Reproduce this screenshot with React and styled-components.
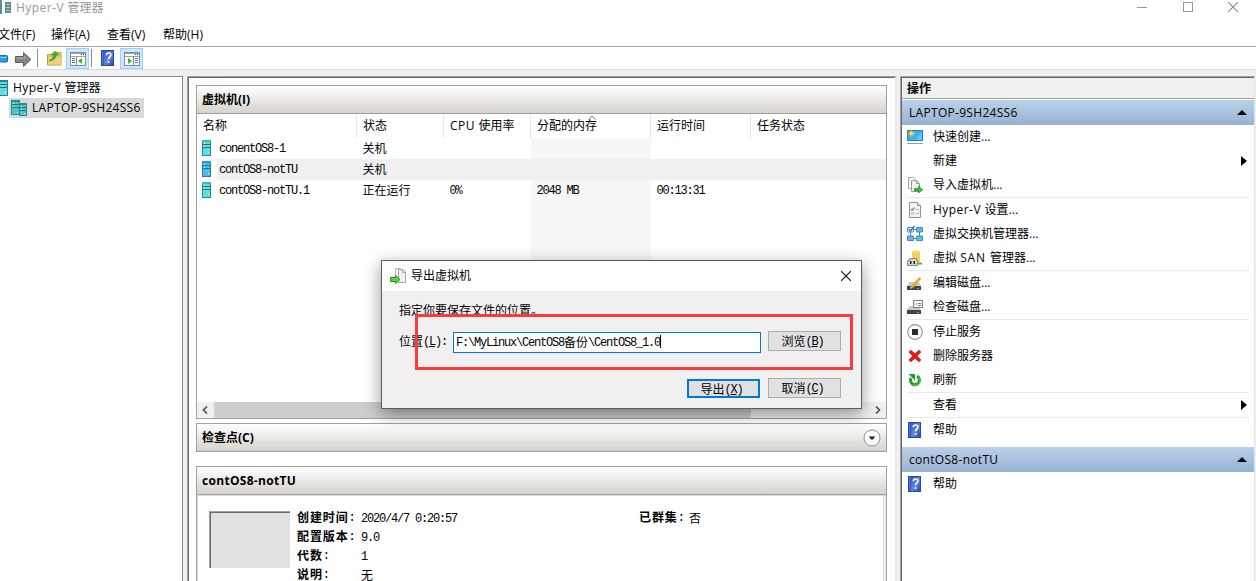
import React from 'react';
import styled, { createGlobalStyle, css } from 'styled-components';

const GlobalStyle = createGlobalStyle`
    * {
        box-sizing: border-box;
    }

    body {
        margin: 0;
        overflow: hidden;
    }
`

const Window = styled.div`
    display: flex;
    flex-direction: column;
    width: 1256px;
    height: 581px;
    overflow: hidden;
    position: relative;
    background: #f0f0f0;
    color: #000;
    font-family: "Open Sans", "Noto Sans CJK SC", sans-serif;
    font-size: 12px;
    line-height: 16px;
    white-space: nowrap;

    svg {
        display: block;
        flex: none;
    }
`

const TitleBar = styled.div`
    display: flex;
    align-items: flex-start;
    height: 24px;
    background: #fff;
    color: #999;
`

const TitleText = styled.span`
    flex: 1;
    padding-left: 5px;
`

const MenuBar = styled.div`
    display: flex;
    align-items: center;
    height: 22px;
    background: #fff;
`

const MenuItem = styled.span`
    width: ${props => props.$width || 56}px;
    margin-left: ${props => props.$shift || 0}px;
`

const ToolBar = styled.div`
    display: flex;
    align-items: center;
    height: 24px;
    background: #fff;
    border-top: 1px solid #a9a9a9;
    border-bottom: 1px solid #dcdcdc;
`

const ToolDivider = styled.div`
    width: 1px;
    height: 18px;
    background: #8c8c8c;
    margin: 0 ${props => props.$right}px 0 ${props => props.$left}px;
`

const ToolArrows = styled.div`
    display: flex;
    align-items: center;
    gap: 7px;
    padding-top: 2px;
`

const ToolButton = styled.div`
    display: flex;
    align-items: center;
    justify-content: center;
    width: 23px;
    height: 21px;
    padding-top: 2px;
    background: #cce8ff;
    border: 1px solid #99d1ff;
    margin-left: ${props => props.$left}px;
`

const Panes = styled.div`
    flex: 1;
    display: flex;
    padding-top: 6px;
    min-height: 0;
`

const Tree = styled.div`
    width: 183px;
    padding-top: 1px;
    background: #fff;
    border-top: 1px solid #828790;
    border-right: 1px solid #828790;
`

const TreeRow = styled.div`
    display: flex;
    align-items: center;
    height: 20px;
    padding-left: ${props => props.$indent}px;
`

const TreeLabel = styled.span`
    height: 20px;
    line-height: 20px;
    padding: 0 3px 0 5px;
    ${props => props.$selected && css`
        background: #d9d9d9;
        margin-left: -18px;
        padding-left: 23px;
    `}
`

const TreeIcon = styled.span`
    z-index: 1;
`

const Sunken = styled.div`
    border-top: 1px solid #a0a0a0;
    border-left: 1px solid #a0a0a0;
    border-right: 1px solid #e3e3e3;
`

const SunkenInner = styled.div`
    height: 100%;
    border-top: 1px solid #696969;
    border-left: 1px solid #696969;
    background: #fff;
`

const Center = styled(Sunken)`
    width: 710px;
    margin-left: 4px;
    border-right: 2px solid #e9e9e9;
`

const CenterInner = styled(SunkenInner)`
    display: flex;
    flex-direction: column;
    padding: 7px 8px 0 7px;
`

const SectionHeader = styled.div`
    display: flex;
    align-items: center;
    justify-content: space-between;
    flex: none;
    height: 29px;
    padding: 0 5px;
    border: 1px solid #a0a0a0;
    background: linear-gradient(#fff, #d6d3cb);
    font-weight: bold;
    margin-top: ${props => props.$top || 0}px;
`

const MachineBox = styled.div`
    height: 305px;
    flex: none;
    border: 1px solid #a0a0a0;
    border-top: none;
    display: flex;
    flex-direction: column;
`

const COLUMNS = '160px 87px 87px 120px 100px 1fr'

const TableHead = styled.div`
    display: grid;
    grid-template-columns: ${COLUMNS};
    height: 24px;
    background: #fff;
`

const HeadCell = styled.div`
    position: relative;
    border-right: 1px solid #e5e5e5;
    padding-left: 6px;
    line-height: 24px;

    &:last-child {
        border: none;
    }

    svg {
        position: absolute;
        top: 1px;
        left: 57px;
    }
`

const TableBody = styled.div`
    flex: 1;
    background: linear-gradient(90deg, #fff 334px, #f7f7f7 334px, #f7f7f7 454px, #fff 454px);
`

const TableRow = styled.div`
    display: grid;
    grid-template-columns: ${COLUMNS};
    height: 21px;
    background: ${props => props.$selected ? 'linear-gradient(90deg, #fff 20px, #f0f0f0 20px)' : 'none'};
`

const Cell = styled.div`
    display: flex;
    align-items: center;
    padding: 0 0 1px ${props => props.$first ? 5 : 5.5}px;
    gap: 8px;
`

const ScrollBar = styled.div`
    display: flex;
    align-items: center;
    justify-content: space-between;
    height: 16px;
    padding: 0 5px 1px;
    background: linear-gradient(90deg, #f0f0f0 17px, #cdcdcd 17px, #cdcdcd 554px, #f0f0f0 554px);
`

const DetailBox = styled.div`
    flex: 1;
    display: flex;
    padding: 15px 0 0 11px;
    border-left: 1px solid #a0a0a0;
    border-right: 1px solid #a0a0a0;
    box-shadow: inset 1px 1px #dcdcdc, inset -2px 0 #ededed, inset -3px 0 #dcdcdc;
`

const Thumbnail = styled.div`
    width: 81px;
    height: 57px;
    margin: 1px 7px 0 1px;
    background: #e1e1e1;
    border-top: 1px solid #a0a0a0;
    border-left: 1px solid #a0a0a0;
    box-shadow: inset 1px 1px #696969;
`

const DetailColumn = styled.div`
    width: ${props => props.$width}px;
    margin-top: -2px;
`

const DetailRow = styled.div`
    display: grid;
    grid-template-columns: ${props => props.$label}px auto;
    align-items: center;
    height: 19px;
`

const Bold = styled.b`
    font-weight: bold;
    letter-spacing: 0.9px;
`

const Actions = styled(Sunken)`
    width: 355px;
    margin-left: 3px;
`

const ActionsTitle = styled.div`
    height: 22px;
    border-bottom: 1px solid #fff;
    background: linear-gradient(#f0f0f0 20px, #a0a0a0 20px);
    font-weight: bold;
    line-height: 21px;
    padding-left: 5px;
`

const GroupHeader = styled.div`
    display: flex;
    align-items: center;
    justify-content: space-between;
    height: 25px;
    padding: 0 7px;
    background: linear-gradient(#bad1e9, #98b2d1);
    margin-top: ${props => props.$top || 0}px;
`

const Action = styled.div`
    display: flex;
    align-items: center;
    height: 24px;
    padding: 0 7px 0 5px;
`

const ActionIcon = styled.span`
    width: 26px;
`

const ActionLabel = styled.span`
    flex: 1;
`

const ActionDivider = styled.div`
    height: 1px;
    margin: 0 5px;
    background: #e8e8e8;
`

const WideText = styled.span`
    letter-spacing: ${props => props.$spacing}px;
`

const SongText = styled.span`
    font-family: "Noto Sans CJK SC", sans-serif;
    font-size: 12px;
    line-height: 16px;
`

const SongLatin = styled.span`
    font-family: "Liberation Mono", monospace;
    font-size: 12px;
    line-height: 12px;
    letter-spacing: -1.2px;
    font-weight: normal;
    vertical-align: 1px;
`

const Dialog = styled.div`
    position: absolute;
    left: 381px;
    top: 260px;
    width: 481px;
    height: 149px;
    border: 1px solid #5c5c5c;
    background: #f0f0f0;
    box-shadow: 0 5px 16px rgba(0, 0, 0, 0.42);
`

const DialogTitle = styled.div`
    display: flex;
    align-items: center;
    height: 30px;
    padding: 0 10px 1px 8px;
    background: #fff;
`

const DialogTitleText = styled.span`
    flex: 1;
    padding: 1px 0 0 4px;
`

const DialogBody = styled.div`
    padding: 11px 20px 0 17px;
`

const PathRow = styled.div`
    display: flex;
    align-items: center;
    height: 20px;
    margin-top: 12px;
`

const PathLabel = styled.div`
    width: 54px;
`

const PathInput = styled.div`
    display: flex;
    align-items: center;
    width: 308px;
    height: 21px;
    margin: 2px 7px 0 0;
    padding: 0 2px 1px;
    background: #fff;
    border: 1px solid #0078d7;
`

const Caret = styled.span`
    width: 1px;
    height: 13px;
    background: #000;
`

const ButtonRow = styled.div`
    display: flex;
    justify-content: flex-end;
    align-items: flex-end;
    gap: 8px;
    margin-top: 27px;
`

const Button = styled.div`
    display: flex;
    align-items: center;
    justify-content: center;
    width: 73px;
    height: ${props => props.$primary ? 19 : 20}px;
    padding-right: 4px;
    background: #e1e1e1;
    border: ${props => props.$primary ? '2px solid #0078d7' : '1px solid #adadad'};
`

const Highlight = styled.div`
    position: absolute;
    left: 415px;
    top: 314px;
    width: 438px;
    height: 56px;
    border: 3px solid #fb3b3b;
`

// latin runs are set on a 6px grid, half of a chinese character
const Song = ({ children, hot }) => (
    <SongText>
        {children.split(/([\x20-\x7e]+)/).map((run, i) => {
            if (i % 2 === 0) return run
            return (
                <SongLatin key={i}>
                    {hot ? <>(<u>{hot}</u>){run.slice(3)}</> : run}
                </SongLatin>
            )
        })}
    </SongText>
)

// only the capitals and latin words get the extra spacing
const Label = ({ children, spacing = 0.45 }) => (
    <span>
        {children.split(/([A-Za-z][A-Za-z0-9-]+ ?)/).map((run, i) => (
            i % 2 === 0 ? run : <WideText key={i} $spacing={spacing}>{run}</WideText>
        ))}
    </span>
)

const ServerIcon = ({ blue }) => (
    <svg width="9" height="16" viewBox="0 0 9 16">
        <rect width="9" height="16" fill={blue ? '#2183ad' : '#1d8f9b'} />
        <rect x="1" y="2" width="7" height="13" fill={blue ? '#4db9e6' : '#63dce0'} />
        <path d="M1 4.5h7M1 7.5h7" stroke={blue ? '#1d7096' : '#167681'} />
        <path d="M2 3.5h1M2 6.5h1M6 12.5h1" stroke="#fff" />
        <path d="M0 1h9" stroke={blue ? '#2a9cc8' : '#36b8c0'} strokeWidth="2" />
    </svg>
)

const HostIcon = () => (
    <svg width="16" height="16" viewBox="0 0 16 16">
        <path fill="#2b8b93" d="M0 0h9v15H0zM8 3h8v13H8z" />
        <path fill="#52c2c8" d="M1 2h7v12H1zM9 5h6v10H9z" />
        <path d="M1 4.5h7M1 7.5h7M9 7.5h6M9 10.5h6" stroke="#20747c" />
        <path d="M2 3.5h1M2 6.5h1M10 6.5h1M10 9.5h1M13 13.5h1M6 12.5h1" stroke="#dff" />
    </svg>
)

const HelpIcon = () => (
    <svg width="16" height="16" viewBox="0 0 16 16">
        <defs>
            <linearGradient id="book" x1="0" y1="0" x2="1" y2="1">
                <stop offset="0" stopColor="#2f55c8" />
                <stop offset=".55" stopColor="#6685dc" />
                <stop offset="1" stopColor="#2748b4" />
            </linearGradient>
        </defs>
        <rect x="1" width="13" height="16" fill="#2a45a4" />
        <rect x="2" y="1" width="1.5" height="14" fill="#4a74e0" />
        <rect x="4" y="1" width="9" height="14" fill="url(#book)" />
        <path d="M6.3 5.2c0-3 4.500-2.800 4.500-.3 0 2-2.200 2-2.200 4.400M8.600 11v2" fill="none" stroke="#fff" strokeWidth="1.600" />
    </svg>
)

const ForwardIcon = () => (
    <svg width="17" height="15" viewBox="0 0 17 15">
        <path d="M.5 4.5h8v-4l7.5 7-7.5 7v-4h-8z" fill="#858585" stroke="#5f5f5f" />
        <path d="M2 6h8V4" fill="none" stroke="#b5b5b5" />
    </svg>
)

const BackIcon = () => (
    <svg width="8" height="8" viewBox="0 0 8 8">
        <rect x="-2" y=".5" width="9.5" height="6.5" rx="1" fill="#2e9be6" stroke="#1668b0" />
        <path d="M0 2.5h6" stroke="#7fd0ff" />
    </svg>
)

const FolderIcon = () => (
    <svg width="15" height="16" viewBox="0 0 15 16">
        <path d="M.5 4.500h5l1-2h7.500v12.500H.5z" fill="#e5c168" stroke="#c49b3c" />
        <path d="M1 7.500h13v7H1z" fill="#efd27e" />
        <path d="M2 10.500c3-1 4.200-3 4.400-5.500H4.500l3.800-4L11.500 5H9.200c-.4 3.500-3 5.800-7.200 6z" fill="#41b52c" stroke="#2b8d20" strokeWidth=".5" />
    </svg>
)

const PaneIcon = ({ right }) => (
    <svg width="16" height="14" viewBox="0 0 16 14">
        <rect x=".5" y=".5" width="15" height="13" fill="#fff" stroke="#858b92" />
        <path d="M1 1.500h14M1 4.500h14" stroke="#9ea3a9" />
        <path d="M11 2.500h1M13 2.500h1" stroke="#444" />
        <path d={right ? 'M9.500 5v9' : 'M6.500 5v9'} stroke="#858b92" />
        <path d={right ? 'M11 6.500h3M11 8.500h3M11 10.500h3' : 'M2 6.500h3M2 8.500h3M2 10.500h3'} stroke="#4a7eb8" />
        <path d={right ? 'M4 6v6l4-3z' : 'M12 6v6L8 9z'} fill="#43b02a" />
    </svg>
)

const CreateIcon = () => (
    <svg width="16" height="16" viewBox="0 0 16 16">
        <rect x=".5" y="1.500" width="15" height="10" fill="#35b1f5" stroke="#2f7fae" />
        <path d="M9 11L15 2v9z" fill="#62c6fa" />
        <path d="M0 14.500h16" stroke="#8ba0b3" />
        <path d="M4.500 .8v7.400M.8 4.500h7.400M2 2l5 5M7 2L2 7" stroke="#efa422" />
        <circle cx="4.500" cy="4.500" r="2" fill="#ffd564" />
    </svg>
)

const ImportIcon = () => (
    <svg width="16" height="16" viewBox="0 0 16 16">
        <path d="M1.500.5h5l2 2v9h-7z" fill="#fafafa" stroke="#a5a5a5" />
        <path d="M4.500 3.500h5l3 3v8h-8z" fill="#f2f2f2" stroke="#9b9b9b" />
        <path d="M9.500 3.500v3h3" fill="none" stroke="#9b9b9b" />
        <path d="M7.500 11.500h4V9.200l4.200 3.600-4.200 3.200V14h-4z" fill="#2fc32f" stroke="#16901c" strokeWidth=".7" />
    </svg>
)

const ExportIcon = () => (
    <svg width="17" height="16" viewBox="0 0 17 16">
        <path d="M5.500.5h5l2 2v9h-7z" fill="#fafafa" stroke="#b5b5b5" />
        <path d="M8.500 1.500h4.500l2.500 2.500v10.500H8.500z" fill="#f2f2f2" stroke="#a5a5a5" />
        <path d="M12.500 1.500v3h3" fill="none" stroke="#a5a5a5" />
        <path d="M.5 9.500h5V7.300L10 11.500l-4.500 4V13.500h-5z" fill="#5fd446" stroke="#1f9420" />
    </svg>
)

const SettingsIcon = () => (
    <svg width="16" height="16" viewBox="0 0 16 16">
        <path d="M2.500.5h8l3 3v12h-11z" fill="#f5f5f5" stroke="#929292" />
        <path d="M10.500.5v3h3" fill="#ddd" stroke="#929292" />
        <path d="M4 7l1.200 1.200L7.500 5.500" fill="none" stroke="#3b95d8" strokeWidth="1.200" />
        <path d="M8.500 7.500H12M8.500 11.500H12" stroke="#b4b4b4" />
        <rect x="4.500" y="10.500" width="2" height="2" fill="none" stroke="#c4c4c4" />
    </svg>
)

const SwitchIcon = () => (
    <svg width="16" height="16" viewBox="0 0 16 16">
        <path d="M7 3.500h2M7 12.500h2M12.500 6v4M3.500 6v4" stroke="#6e6e6e" />
        <path d="M.5 1.500h6v4.500h-6z" fill="#fff" stroke="#4a94c9" />
        <path d="M9.500 1.500h6v4.500h-6zM.5 10h6v4.500h-6zM9.500 10h6v4.500h-6z" fill="#5db9f0" stroke="#3b8cc4" />
        <path d="M1.500 3l2 2L7.500 0" fill="none" stroke="#1c72ba" strokeWidth="1.300" />
    </svg>
)

const SanIcon = () => (
    <svg width="16" height="16" viewBox="0 0 16 16">
        <path d="M5 1.500q4-2 8 0V12H5z" fill="#f4d04c" />
        <path d="M5 1.500q4 2 8 0" fill="none" stroke="#fdea96" />
        <path d="M11 13.500h4" stroke="#4bb257" strokeWidth="2" />
        <path d="M2.500 8.500h7v2h1v5H.5v-5h2z" fill="#d5d5d5" stroke="#848484" />
        <rect x="3" y="11" width="1.500" height="3" fill="#222" />
        <rect x="6.500" y="11" width="1.500" height="3" fill="#222" />
    </svg>
)

const EditDiskIcon = () => (
    <svg width="16" height="16" viewBox="0 0 16 16">
        <path d="M2.500 7h9.500l2 4H0z" fill="#c9c9c9" />
        <path d="M0 11h14v4H0z" fill="#454545" />
        <path d="M10 13.500h2" stroke="#38dd53" />
        <path d="M5 12l6.500-7" stroke="#efa52b" strokeWidth="2.600" />
        <path d="M11.500 5l1.800-2" stroke="#e08a80" strokeWidth="2.600" />
        <path d="M3.200 13.800l.8-2.500 1.800 1.700z" fill="#f7dcab" />
    </svg>
)

const CheckDiskIcon = () => (
    <svg width="16" height="16" viewBox="0 0 16 16">
        <path d="M2.500 7h9l2 4H0z" fill="#c9c9c9" />
        <path d="M0 11h14v4H0z" fill="#454545" />
        <path d="M10 13.500h2" stroke="#38dd53" />
        <rect x="6.500" y="1.500" width="9" height="7" fill="#fff" stroke="#7c8187" />
        <path d="M6 1.500h10" stroke="#7c8187" />
        <path d="M8 5h2M11 4.500h3M11 6.500h3" stroke="#777" />
    </svg>
)

const StopIcon = () => (
    <svg width="16" height="16" viewBox="0 0 16 16">
        <circle cx="8" cy="8" r="7.300" fill="#fff" stroke="#979797" strokeWidth="1.200" />
        <rect x="5" y="5" width="6" height="6" fill="#292929" />
    </svg>
)

const DeleteIcon = () => (
    <svg width="16" height="16" viewBox="0 0 16 16">
        <path d="M1.500 4L4 1.800 8 5.500 12 1.800 14.300 4 10.500 8l3.800 4L12 14.300 8 10.500 4 14.300 1.500 12 5.300 8z" fill="#e2191d" />
    </svg>
)

const RefreshIcon = () => (
    <svg width="16" height="16" viewBox="0 0 16 16">
        <path d="M10 4.200A4.500 4.500 0 1 1 4 6" fill="none" stroke="#1da032" strokeWidth="3" />
        <path d="M1.500 2h6.500v6.500z" fill="#1da032" />
        <path d="M11.500 5.800A4 4 0 0 1 6 12" fill="none" stroke="#51cc57" />
    </svg>
)

const CloseGlyph = ({ color, size = 10 }) => (
    <svg width={size} height={size} viewBox="0 0 10 10">
        <path d="M0 0l10 10M10 0L0 10" stroke={color} strokeWidth="1.100" />
    </svg>
)

const WindowButtons = styled.div`
    display: flex;
    gap: 35.5px;
    padding: 2px 18px 0 0;
`

const machines = [
    { name: 'conentOS8-1', state: '关机' },
    { name: 'contOS8-notTU', state: '关机', selected: true },
    { name: 'contOS8-notTU.1', state: '正在运行', cpu: '0%', memory: '2048 MB', uptime: '00:13:31' },
]

const details = [
    ['创建时间', '2020/4/7 0:20:57'],
    ['配置版本', '9.0'],
    ['代数', '1'],
    ['说明', '无'],
]

const actions = [
    { label: '快速创建...', icon: CreateIcon },
    { label: '新建', more: true },
    { label: '导入虚拟机...', icon: ImportIcon, end: true },
    { label: 'Hyper-V 设置...', icon: SettingsIcon },
    { label: '虚拟交换机管理器...', icon: SwitchIcon },
    { label: '虚拟 SAN 管理器...', icon: SanIcon, spacing: 0.9, end: true },
    { label: '编辑磁盘...', icon: EditDiskIcon },
    { label: '检查磁盘...', icon: CheckDiskIcon, end: true },
    { label: '停止服务', icon: StopIcon },
    { label: '删除服务器', icon: DeleteIcon },
    { label: '刷新', icon: RefreshIcon, end: true },
    { label: '查看', more: true, end: true },
    { label: '帮助', icon: HelpIcon },
]

const ActionRow = ({ label, icon: Icon, more, spacing }) => (
    <Action>
        <ActionIcon>{Icon && <Icon />}</ActionIcon>
        <ActionLabel><Label spacing={spacing}>{label}</Label></ActionLabel>
        {more && <svg width="6" height="10" viewBox="0 0 6 10"><path d="M0 0l6 5-6 5z" /></svg>}
    </Action>
)

const CollapseArrow = () => (
    <svg width="10" height="5" viewBox="0 0 10 5"><path d="M5 0l5 5H0z" /></svg>
)

const Head = () => (
    <>
        <TitleBar>
            <svg width="11" height="16" viewBox="5 0 11 16">
                <path fill="#5b8f94" d="M5 0h2v14H5zM10 2h6v11h-6z" />
                <path d="M11 4.500h4M11 7.500h4M11 10.500h4" stroke="#a9cdd0" />
            </svg>
            <TitleText><Label>Hyper-V 管理器</Label></TitleText>
            <WindowButtons>
                <svg width="10" height="10"><path d="M0 5.500h10" stroke="#999" /></svg>
                <svg width="10" height="10"><rect x=".5" y=".5" width="9" height="9" fill="none" stroke="#999" /></svg>
                <CloseGlyph color="#888" />
            </WindowButtons>
        </TitleBar>
        <MenuBar>
            <MenuItem $width={53} $shift={-2}>文件(F)</MenuItem>
            <MenuItem>操作(A)</MenuItem>
            <MenuItem>查看(V)</MenuItem>
            <MenuItem>帮助(H)</MenuItem>
        </MenuBar>
        <ToolBar>
            <ToolArrows>
                <BackIcon />
                <ForwardIcon />
            </ToolArrows>
            <ToolDivider $left={5} $right={9} />
            <FolderIcon />
            <ToolButton $left={4}><PaneIcon /></ToolButton>
            <ToolDivider $left={2} $right={8} />
            <HelpIcon />
            <ToolButton $left={4}><PaneIcon right /></ToolButton>
        </ToolBar>
    </>
)

const ExportDialog = () => (
    <Dialog>
        <DialogTitle>
            <ExportIcon />
            <DialogTitleText>导出虚拟机</DialogTitleText>
            <CloseGlyph color="#111" />
        </DialogTitle>
        <DialogBody>
            <Song>指定你要保存文件的位置。</Song>
            <PathRow>
                <PathLabel><Song hot="L">位置(L):</Song></PathLabel>
                <PathInput>
                    <Song>F:\MyLinux\CentOS8备份\CentOS8_1.0</Song>
                    <Caret />
                </PathInput>
                <Button><Song hot="B">浏览(B)</Song></Button>
            </PathRow>
            <ButtonRow>
                <Button $primary><Song hot="X">导出(X)</Song></Button>
                <Button><Song hot="C">取消(C)</Song></Button>
            </ButtonRow>
        </DialogBody>
    </Dialog>
)

const App = () => {
    return (
        <Window>
            <GlobalStyle />
            <Head />
            <Panes>
                <Tree>
                    <TreeRow $indent={0}>
                        <svg width="8" height="16" viewBox="1 0 8 16">
                            <path fill="#1b8792" d="M0 0h9v16H0z" />
                            <path fill="#63dce0" d="M0 2h8v13H0z" />
                            <path d="M0 4.500h8M0 7.500h8" stroke="#167681" />
                            <path d="M6 12.500h1" stroke="#fff" />
                        </svg>
                        <TreeLabel><Label>Hyper-V 管理器</Label></TreeLabel>
                    </TreeRow>
                    <TreeRow $indent={11}>
                        <TreeIcon><HostIcon /></TreeIcon>
                        <TreeLabel $selected><Label spacing={0.3}>LAPTOP-9SH24SS6</Label></TreeLabel>
                    </TreeRow>
                </Tree>

                <Center>
                    <CenterInner>
                        <SectionHeader>虚拟机(I)</SectionHeader>
                        <MachineBox>
                            <TableHead>
                                <HeadCell>名称</HeadCell>
                                <HeadCell>状态</HeadCell>
                                <HeadCell><Label>CPU 使用率</Label></HeadCell>
                                <HeadCell>
                                    分配的内存
                                    <svg width="8" height="5"><path d="M.5 4.500L4 1l3.500 3.500" fill="none" stroke="#777" /></svg>
                                </HeadCell>
                                <HeadCell>运行时间</HeadCell>
                                <HeadCell>任务状态</HeadCell>
                            </TableHead>
                            <TableBody>
                                {machines.map(vm => (
                                    <TableRow key={vm.name} $selected={vm.selected}>
                                        <Cell $first><ServerIcon blue={vm.selected} /><Song>{vm.name}</Song></Cell>
                                        <Cell><Song>{vm.state}</Song></Cell>
                                        <Cell>{vm.cpu && <Song>{vm.cpu}</Song>}</Cell>
                                        <Cell>{vm.memory && <Song>{vm.memory}</Song>}</Cell>
                                        <Cell>{vm.uptime && <Song>{vm.uptime}</Song>}</Cell>
                                        <Cell />
                                    </TableRow>
                                ))}
                            </TableBody>
                            <ScrollBar>
                                <svg width="6" height="8"><path d="M5 .5L1.500 4 5 7.500" fill="none" stroke="#555" strokeWidth="1.700" /></svg>
                                <svg width="6" height="8"><path d="M1 .5L4.500 4 1 7.500" fill="none" stroke="#555" strokeWidth="1.700" /></svg>
                            </ScrollBar>
                        </MachineBox>

                        <SectionHeader $top={4}>
                            检查点(C)
                            <svg width="18" height="18" viewBox="0 0 18 18">
                                <circle cx="9" cy="9" r="8" fill="#fff" stroke="#8d8d8d" />
                                <path d="M5.500 7.500h7L9 11z" fill="#222" />
                            </svg>
                        </SectionHeader>

                        <SectionHeader $top={14}><Label spacing={0.3}>contOS8-notTU</Label></SectionHeader>
                        <DetailBox>
                            <Thumbnail />
                            <DetailColumn $width={342}>
                                {details.map(([label, value]) => (
                                    <DetailRow key={label} $label={64}>
                                        <Bold><Song>{label + ':'}</Song></Bold>
                                        <Song>{value}</Song>
                                    </DetailRow>
                                ))}
                            </DetailColumn>
                            <DetailColumn $width={120}>
                                <DetailRow $label={50}>
                                    <Bold><Song>已群集:</Song></Bold>
                                    <Song>否</Song>
                                </DetailRow>
                            </DetailColumn>
                        </DetailBox>
                    </CenterInner>
                </Center>

                <Actions>
                    <SunkenInner>
                        <ActionsTitle>操作</ActionsTitle>
                        <GroupHeader><Label spacing={0.3}>LAPTOP-9SH24SS6</Label><CollapseArrow /></GroupHeader>
                        {actions.map(action => (
                            <React.Fragment key={action.label}>
                                <ActionRow {...action} />
                                {action.end && <ActionDivider />}
                            </React.Fragment>
                        ))}
                        <GroupHeader $top={5}><Label spacing={0.3}>contOS8-notTU</Label><CollapseArrow /></GroupHeader>
                        <ActionRow label="帮助" icon={HelpIcon} />
                    </SunkenInner>
                </Actions>
            </Panes>
            <ExportDialog />
            <Highlight />
        </Window>
    )
}

export default App
